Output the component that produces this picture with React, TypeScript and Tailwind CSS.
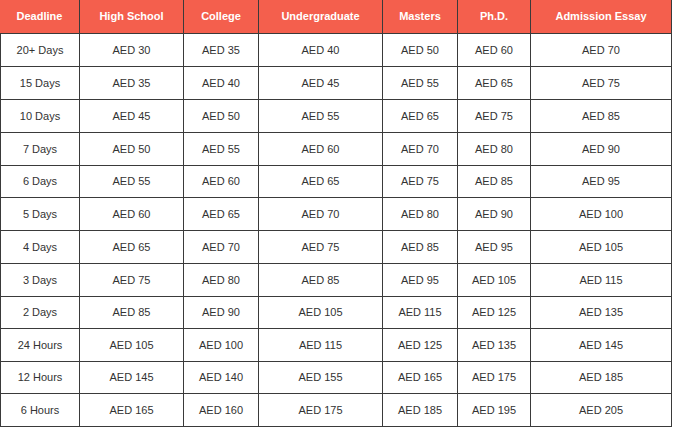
import React from "react";

const headers = ["Deadline", "High School", "College", "Undergraduate", "Masters", "Ph.D.", "Admission Essay"];
const rows: string[][] = [
  ["20+ Days", "30", "35", "40", "50", "60", "70"],
  ["15 Days", "35", "40", "45", "55", "65", "75"],
  ["10 Days", "45", "50", "55", "65", "75", "85"],
  ["7 Days", "50", "55", "60", "70", "80", "90"],
  ["6 Days", "55", "60", "65", "75", "85", "95"],
  ["5 Days", "60", "65", "70", "80", "90", "100"],
  ["4 Days", "65", "70", "75", "85", "95", "105"],
  ["3 Days", "75", "80", "85", "95", "105", "115"],
  ["2 Days", "85", "90", "105", "115", "125", "135"],
  ["24 Hours", "105", "100", "115", "125", "135", "145"],
  ["12 Hours", "145", "140", "155", "165", "175", "185"],
  ["6 Hours", "165", "160", "175", "185", "195", "205"],
];
const widths = ["w-[80px]", "w-[104px]", "w-[75px]", "w-[124px]", "w-[75px]", "w-[73px]", "w-[141px]"];
const heights = ["h-[33px]", "h-[33px]", "h-[33px]", "h-[33px]", "h-[32px]", "h-[33px]", "h-[33px]", "h-[33px]", "h-[32px]", "h-[33px]", "h-[32px]", "h-[33px]"];

export default function App() {
  return (
    <div className="w-[674px] h-[427px] bg-white overflow-hidden" style={{ fontFamily: '"Liberation Sans", Arial, sans-serif' }}>
      <div className="flex flex-col w-[672px]">
        <div className="flex h-[34px] bg-[#f45f4d] border-b border-[#3a3a3a]">
          {headers.map((h, i) => (
            <div
              key={h}
              className={`${widths[i]} flex items-center justify-center border-r border-[#3a3a3a] text-[11px] font-bold text-white`}
            >
              {h}
            </div>
          ))}
        </div>
        {rows.map((r, ri) => (
          <div key={ri} className={`flex ${heights[ri]} border-b border-[#3a3a3a]`}>
            {r.map((c, ci) => (
              <div
                key={ci}
                className={`${widths[ci]} flex items-center justify-center border-r border-[#3a3a3a] text-[11px] text-[#333333] ${ci === 0 ? "border-l" : ""}`}
              >
                {ci === 0 ? c : `AED ${c}`}
              </div>
            ))}
          </div>
        ))}
      </div>
    </div>
  );
}
